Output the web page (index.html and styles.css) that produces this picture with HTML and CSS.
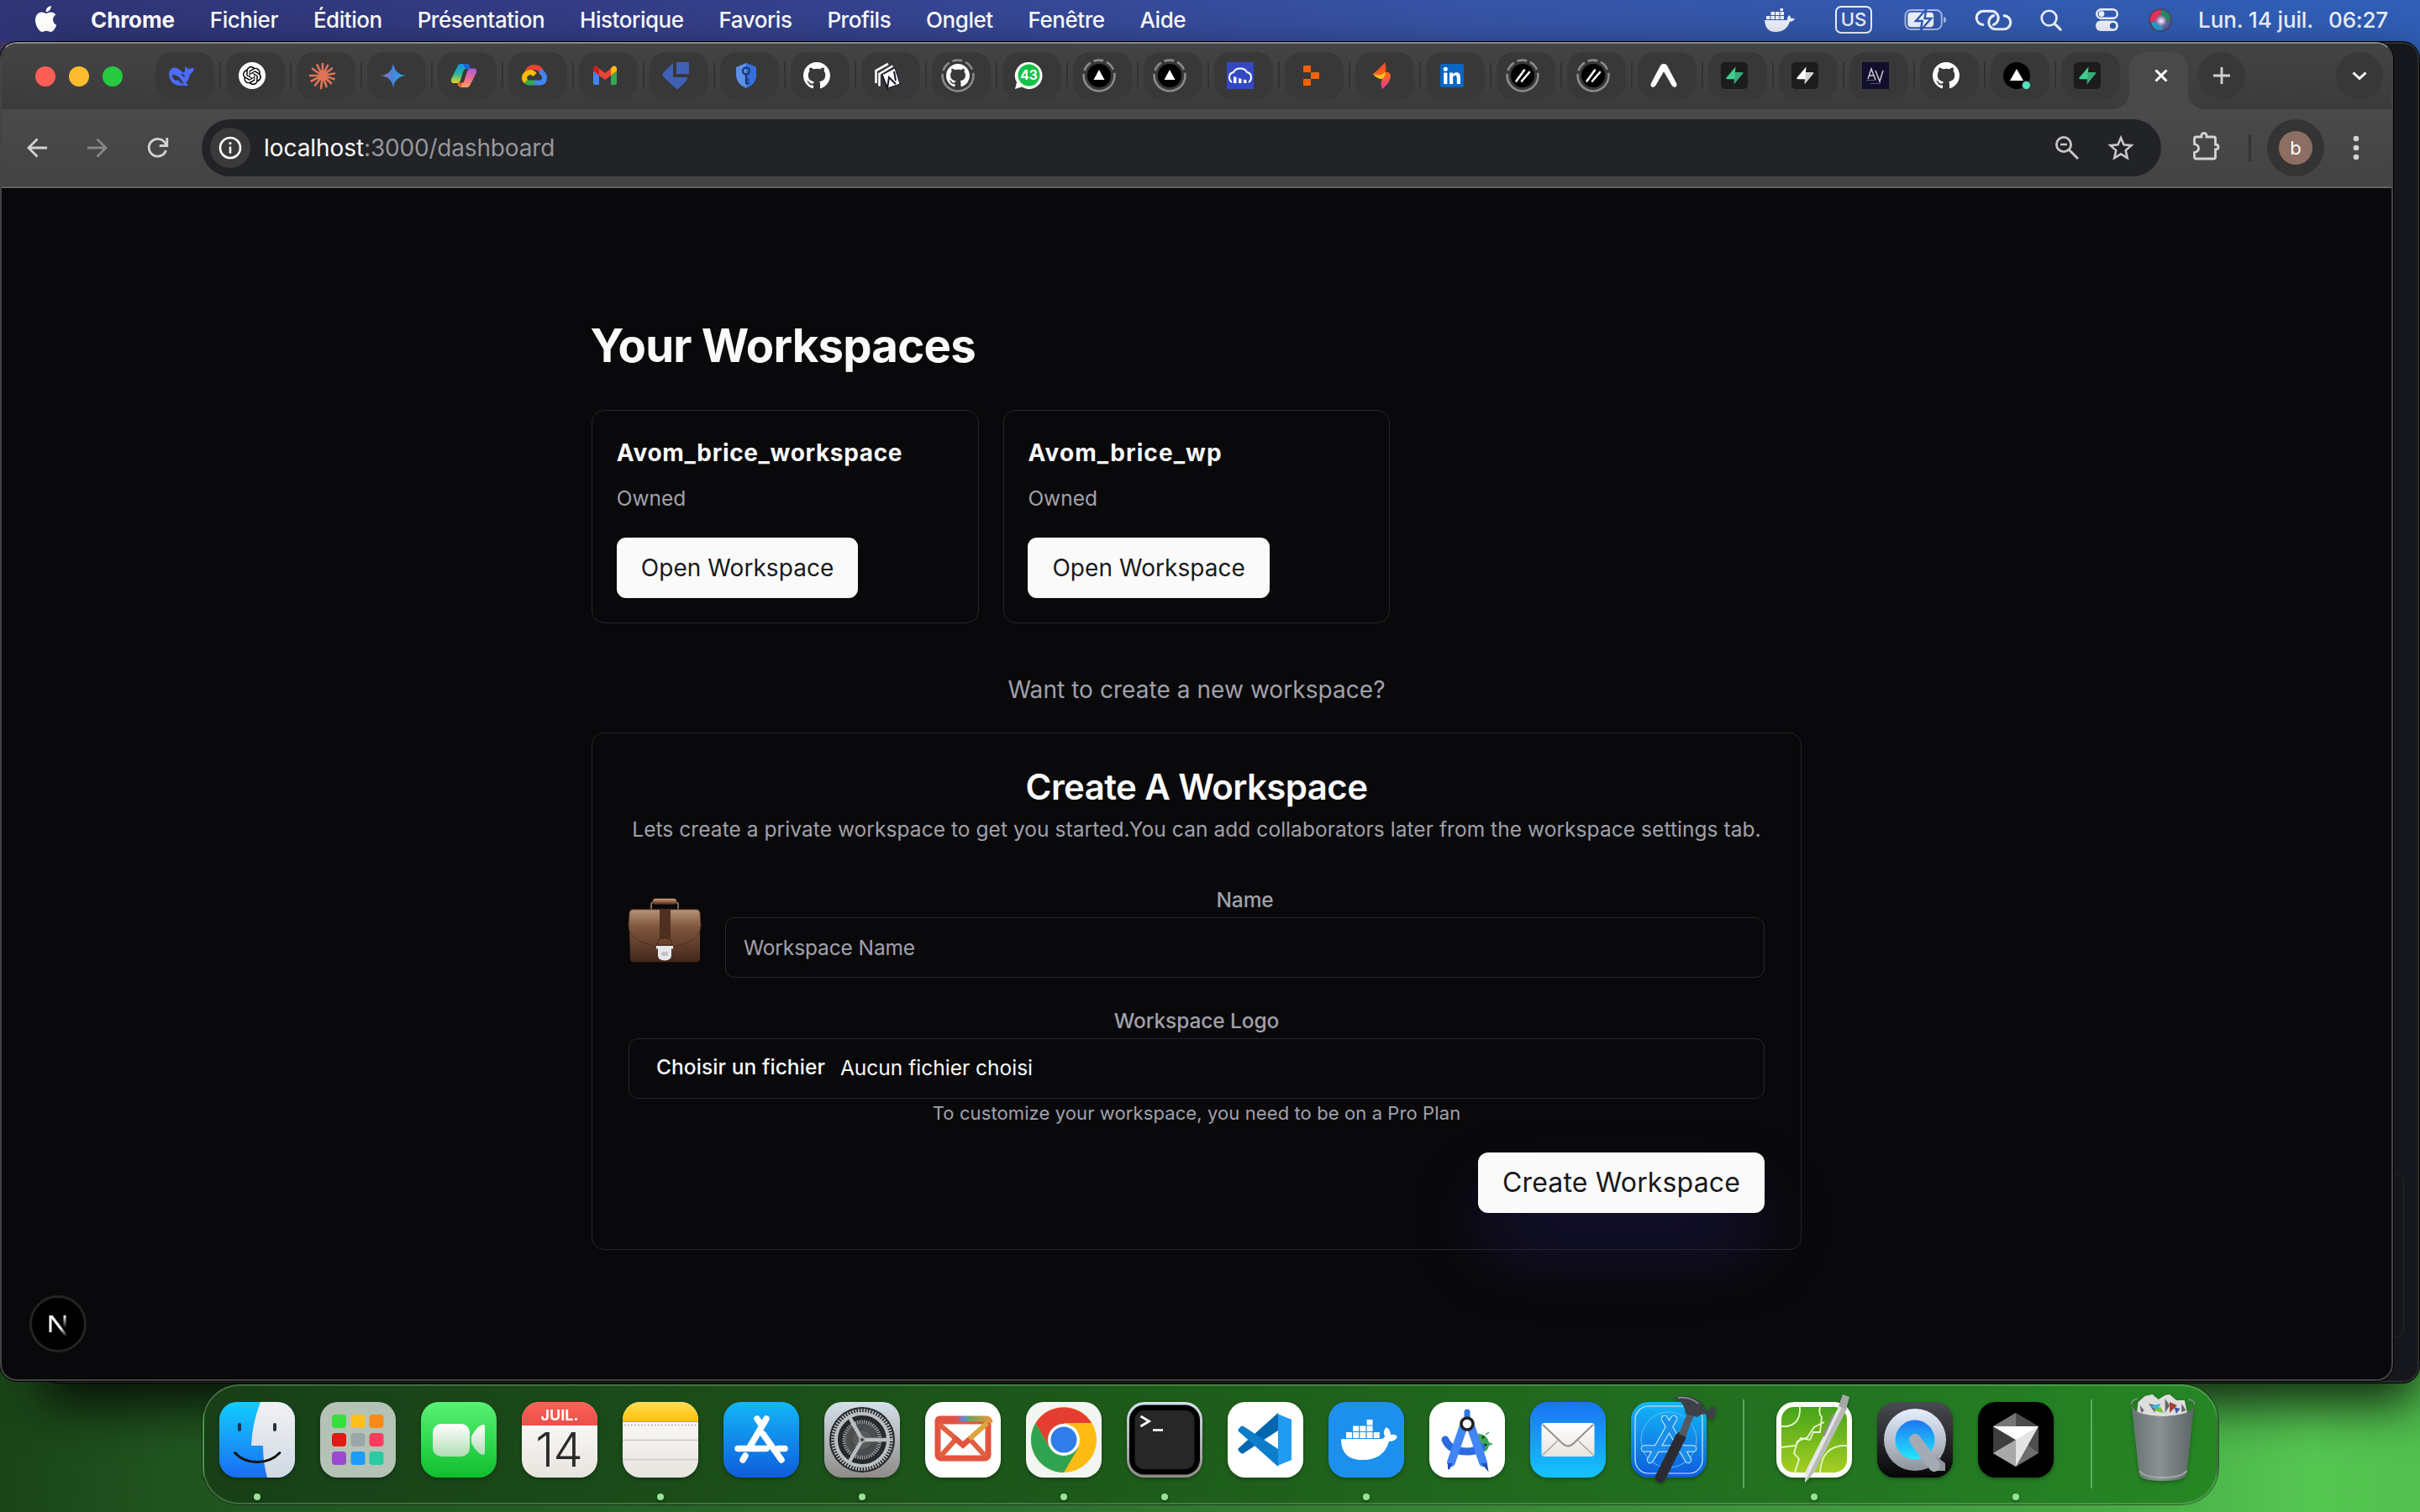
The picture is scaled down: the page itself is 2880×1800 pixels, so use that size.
FILE: index.html
```html
<!DOCTYPE html>
<html lang="fr">
<head>
<meta charset="utf-8">
<title>Dashboard</title>
<link rel="stylesheet" href="styles.css">
</head>
<body>
<svg class="defs" width="0" height="0" aria-hidden="true">
  <defs>
    <linearGradient id="gGem" x1="0" x2="1"><stop offset="0" stop-color="#9a6fb8"/><stop offset=".45" stop-color="#4c82d8"/><stop offset="1" stop-color="#16b3e6"/></linearGradient>
    <linearGradient id="gCopA" x1="0" y1="0" x2="0" y2="1"><stop offset="0" stop-color="#1496e8"/><stop offset=".5" stop-color="#27b5a0"/><stop offset="1" stop-color="#e9d51f"/></linearGradient>
    <linearGradient id="gCopB" x1="0" y1="0" x2="0" y2="1"><stop offset="0" stop-color="#a65be8"/><stop offset=".55" stop-color="#f06a8e"/><stop offset="1" stop-color="#f7a35c"/></linearGradient>
    <linearGradient id="gFlame" x1="0" y1="0" x2="0" y2="1"><stop offset="0" stop-color="#ef3f2f"/><stop offset=".45" stop-color="#fb6a1a"/><stop offset="1" stop-color="#e0359a"/></linearGradient>
    <linearGradient id="gFinder" x1="0" y1="0" x2="0" y2="1"><stop offset="0" stop-color="#12ccff"/><stop offset="1" stop-color="#1a6df2"/></linearGradient>
    <linearGradient id="gFinderR" x1="0" y1="0" x2="0" y2="1"><stop offset="0" stop-color="#f1f1f3"/><stop offset="1" stop-color="#cfd9e5"/></linearGradient>
    <linearGradient id="gFace" x1="0" y1="0" x2="0" y2="1"><stop offset="0" stop-color="#58f274"/><stop offset="1" stop-color="#0fbf2c"/></linearGradient>
    <linearGradient id="gLens" x1="0" y1="0" x2="0" y2="1"><stop offset="0" stop-color="#fff"/><stop offset="1" stop-color="#b2dcb6"/></linearGradient>
    <linearGradient id="gRed" x1="0" y1="0" x2="0" y2="1"><stop offset="0" stop-color="#ff6157"/><stop offset="1" stop-color="#e9504a"/></linearGradient>
    <linearGradient id="gNote" x1="0" y1="0" x2="0" y2="1"><stop offset="0" stop-color="#ffdd55"/><stop offset="1" stop-color="#ffc107"/></linearGradient>
    <linearGradient id="gPaper" x1="0" y1="0" x2="0" y2="1"><stop offset="0" stop-color="#fff"/><stop offset="1" stop-color="#e8e4de"/></linearGradient>
    <linearGradient id="gStore" x1="0" y1="0" x2="0" y2="1"><stop offset="0" stop-color="#12b7f8"/><stop offset="1" stop-color="#0f5cdc"/></linearGradient>
    <linearGradient id="gSet" x1="0" y1="0" x2="0" y2="1"><stop offset="0" stop-color="#d3e1ea"/><stop offset="1" stop-color="#8f8b88"/></linearGradient>
    <linearGradient id="gMail" x1="0" y1="0" x2="0" y2="1"><stop offset="0" stop-color="#1b73f2"/><stop offset="1" stop-color="#14c4fd"/></linearGradient>
    <linearGradient id="gMime" x1="0" x2="1"><stop offset="0" stop-color="#e2523e"/><stop offset=".36" stop-color="#e0504a"/><stop offset=".5" stop-color="#5b8ae0"/><stop offset=".62" stop-color="#6aa65a"/><stop offset="1" stop-color="#e8963a"/></linearGradient>
    <linearGradient id="gCote" x1="0" y1="0" x2="0" y2="1"><stop offset="0" stop-color="#46a31a"/><stop offset="1" stop-color="#a5cf22"/></linearGradient>
    <linearGradient id="gQbg" x1="0" y1="0" x2="0" y2="1"><stop offset="0" stop-color="#4a4c52"/><stop offset="1" stop-color="#060607"/></linearGradient>
    <linearGradient id="gQ" x1="0" y1="0" x2="0" y2="1"><stop offset="0" stop-color="#e6efff"/><stop offset="1" stop-color="#8d939c"/></linearGradient>
    <linearGradient id="gQb" x1="0" y1="0" x2="0" y2="1"><stop offset="0" stop-color="#1d76f2"/><stop offset="1" stop-color="#23e8ff"/></linearGradient>
    <linearGradient id="gTrash" x1="0" x2="1"><stop offset="0" stop-color="#6d7377"/><stop offset=".45" stop-color="#8f9498"/><stop offset="1" stop-color="#5f6569"/></linearGradient>
    <linearGradient id="gBag" x1="0" y1="0" x2="0" y2="1"><stop offset="0" stop-color="#b8947a"/><stop offset=".45" stop-color="#80583f"/><stop offset="1" stop-color="#5f3b2a"/></linearGradient>
    <linearGradient id="gBody" x1="0" y1="0" x2="0" y2="1"><stop offset="0" stop-color="#80563f"/><stop offset="1" stop-color="#43271d"/></linearGradient>
    <linearGradient id="gHandle" x1="0" y1="0" x2="0" y2="1"><stop offset="0" stop-color="#d9a07a"/><stop offset="1" stop-color="#4b2b1b"/></linearGradient>
    <radialGradient id="gSiri"><stop offset="0" stop-color="#fff"/><stop offset=".4" stop-color="#c4a5d8"/><stop offset="1" stop-color="#40587f" stop-opacity="0"/></radialGradient>
    <linearGradient id="gN1" x1="0" y1="0" x2="0" y2="1"><stop offset="0" stop-color="#fff"/><stop offset="1" stop-color="#fff" stop-opacity="0"/></linearGradient>
    <linearGradient id="gN2" gradientUnits="userSpaceOnUse" x1="30" y1="30" x2="44" y2="49"><stop offset=".45" stop-color="#fff"/><stop offset="1" stop-color="#fff" stop-opacity="0"/></linearGradient>
    <symbol id="github" viewBox="0 0 16 16"><path fill="#fff" d="M8 0C3.58 0 0 3.58 0 8c0 3.54 2.29 6.53 5.47 7.59.4.07.55-.17.55-.38 0-.19-.01-.82-.01-1.49-2.01.37-2.53-.49-2.69-.94-.09-.23-.48-.94-.82-1.13-.28-.15-.68-.52-.01-.53.63-.01 1.08.58 1.23.82.72 1.21 1.87.87 2.33.66.07-.52.28-.87.51-1.07-1.78-.2-3.64-.89-3.64-3.95 0-.87.31-1.59.82-2.15-.08-.2-.36-1.02.08-2.12 0 0 .67-.21 2.2.82.64-.18 1.32-.27 2-.27s1.36.09 2 .27c1.53-1.04 2.2-.82 2.2-.82.44 1.1.16 1.92.08 2.12.51.56.82 1.27.82 2.15 0 3.07-1.87 3.75-3.65 3.95.29.25.54.73.54 1.48 0 1.07-.01 1.93-.01 2.2 0 .21.15.46.55.38A8.01 8.01 0 0 0 16 8c0-4.42-3.58-8-8-8z"/></symbol>
    <symbol id="ring" viewBox="-4 -4 40 40"><circle cx="16" cy="16" r="18.400" fill="none" stroke="#8a8a8a" stroke-width="2.600" stroke-dasharray="26 4 12 4 12 4 12 4 37.600 0" transform="rotate(-255 16 16)"/></symbol>
    <symbol id="bolt" viewBox="0 0 32 32"><rect width="32" height="32" rx="5" fill="#1c1c1c"/><path d="M17.500 5.500 6.500 18.600q-.8 1.600 1 1.600h8.600z" fill="currentColor"/><path d="M15.600 26.500l10.600-13q.9-1.600-1-1.600h-9z" fill="currentColor" opacity=".8"/></symbol>
    <symbol id="vercel" viewBox="0 0 32 32"><circle cx="16" cy="16" r="14" fill="#000"/><path d="M16 9l6.500 12h-13z" fill="#fff"/></symbol>
    <symbol id="slashes" viewBox="0 0 32 32"><circle cx="16" cy="16" r="14" fill="#000"/><path d="M8.500 22.500 18 9.500M15 22.500 24 12" stroke="#fff" stroke-width="2.600" stroke-linecap="round"/></symbol>
    <clipPath id="squircle"><rect width="90" height="90" rx="21"/></clipPath>
  </defs>
</svg>

<header class="menubar">
  <svg class="apple" viewBox="1.500 0 20 24"><path fill="#fff" d="M12.152 6.896c-.948 0-2.415-1.078-3.96-1.04-2.04.027-3.91 1.183-4.961 3.014-2.117 3.675-.546 9.103 1.519 12.09 1.013 1.454 2.208 3.09 3.792 3.039 1.52-.065 2.09-.987 3.935-.987 1.831 0 2.35.987 3.96.948 1.637-.026 2.676-1.48 3.676-2.948 1.156-1.688 1.636-3.325 1.662-3.415-.039-.013-3.182-1.221-3.22-4.857-.026-3.04 2.48-4.494 2.597-4.559-1.429-2.09-3.623-2.324-4.39-2.376-2-.156-3.675 1.09-4.61 1.09zM15.53 3.83c.843-1.012 1.4-2.427 1.245-3.83-1.207.052-2.662.805-3.532 1.818-.78.896-1.454 2.338-1.273 3.714 1.338.104 2.715-.688 3.559-1.701"/></svg>
  <nav class="menus">
    <span class="app-name">Chrome</span><span>Fichier</span><span>Édition</span><span>Présentation</span><span>Historique</span><span>Favoris</span><span>Profils</span><span>Onglet</span><span>Fenêtre</span><span>Aide</span>
  </nav>
  <div class="status">
    <svg class="st-docker" viewBox="0 0 36 28"><path fill="#eef2fc" d="M0 14h27q0-4 2-6 2 1 2.500 4 3-.5 4.500.5-1.500 3-6 3.200Q26 28 13 28 1 28 0 14zM2 9h4.500v4H2zM7.500 9H12v4H7.500zM13 9h4.500v4H13zM18.500 9H23v4h-4.500zM7.500 4H12v4H7.500zM13 4h4.500v4H13zM18.500 4H23v4h-4.500zM18.500 0H22v3h-3.500z"/></svg>
    <span class="kbd">US</span>
    <svg class="st-batt" viewBox="0 0 52 26"><rect x="1" y="1" width="45" height="24" rx="7" fill="none" stroke="#a9bce8" stroke-width="2"/><path d="M48.500 9q3 1 3 4t-3 4z" fill="#a9bce8"/><rect x="4" y="4" width="32" height="18" rx="4" fill="#eef2fc"/><path d="M27 0 14 14.500h8L20 26l13-14.500h-8z" fill="#eef2fc" stroke="#3459b1" stroke-width="2.500"/></svg>
    <svg class="st-link" viewBox="0 0 44 26"><g fill="none" stroke="#eef2fc" stroke-width="3.200" stroke-linecap="round"><path d="M9 18.500a8 8 0 0 1 1-16.500h9a8.500 8.500 0 0 1 8 12q-1.500 3.500-5 4.500"/><path d="M35 7.500a8 8 0 0 1-1 16.500h-9a8.500 8.500 0 0 1-8-12q1.500-3.500 5-4.500"/></g></svg>
    <svg class="st-search" viewBox="0 0 27 27"><circle cx="11" cy="11" r="9.200" fill="none" stroke="#eef2fc" stroke-width="2.800"/><path d="M18 18l7 7" stroke="#eef2fc" stroke-width="3.400" stroke-linecap="round"/></svg>
    <svg class="st-ctrl" viewBox="0 0 27 27"><rect x="1.200" y="1.200" width="24.600" height="10.600" rx="5.300" fill="none" stroke="#eef2fc" stroke-width="2.400"/><circle cx="7" cy="6.500" r="3.400" fill="#eef2fc"/><rect y="14.500" width="27" height="12.500" rx="6.200" fill="#eef2fc"/><circle cx="20.500" cy="20.700" r="3.600" fill="#345ab2"/></svg>
    <svg class="st-siri" viewBox="0 0 28 28"><circle cx="14" cy="14" r="14" fill="#51466c"/><path d="M2 16A12 12 0 0 1 15 2q1 8-2 14z" fill="#e8315b"/><path d="M15 2a12 12 0 0 1 11 12q-6 2-12 0z" fill="#1f8f5c"/><path d="M3 17q7-3 11 0l4 8q-11 4-15-8z" fill="#1fa3d8"/><path d="M26 15q-1 8-8 10l-4-9z" fill="#5b62a8"/><circle cx="15" cy="15" r="9" fill="url(#gSiri)"/></svg>
    <span class="date">Lun. 14 juil.</span><span class="time">06:27</span>
  </div>
</header>

<div class="stage">
  <div class="back-window"><i class="back-scroll"></i><i class="back-panel"></i></div>
  <section class="window">
    <div class="tabstrip">
      <div class="lights"><i class="red"></i><i class="yellow"></i><i class="green"></i></div>
      <div class="tabs">
        <div class="tab"><svg class="fav" viewBox="0 0 32 32"><path fill="#4d6bfe" d="M1 14Q2 6 9 6.500q3 .5 6 3.500 2 2.500 4.500 2.500 1.500-3.500.5-7.500 2.500 1 4 3.500 3-2 7-1.500-.5 5-5 7.500-.5 6-5 10l3.500 2.500q-3.500 2-7 .5Q9 29 4 23q-3-4-3-9z"/><path fill="#383838" d="M5 15q6 0 10 5 3 4 4 6-5-1-7-5-3 2-5-.5Q5 18 5 15zM15 13.500q4 0 5.500 4-3 .5-5.500-4z"/></svg></div>
        <div class="tab"><svg class="fav" viewBox="0 0 32 32"><circle cx="16" cy="16" r="16" fill="#fff"/><path transform="translate(5 5) scale(.917)" d="M22.282 9.821a5.985 5.985 0 0 0-.516-4.91 6.046 6.046 0 0 0-6.51-2.9A6.065 6.065 0 0 0 4.981 4.182a5.985 5.985 0 0 0-3.998 2.9 6.046 6.046 0 0 0 .743 7.097 5.98 5.98 0 0 0 .51 4.911 6.051 6.051 0 0 0 6.515 2.9A5.985 5.985 0 0 0 13.26 24a6.056 6.056 0 0 0 5.772-4.206 5.99 5.99 0 0 0 3.997-2.9 6.056 6.056 0 0 0-.747-7.073zM13.260 22.430a4.476 4.476 0 0 1-2.876-1.040l.141-.081 4.779-2.758a.795.795 0 0 0 .392-.681v-6.737l2.020 1.168a.071.071 0 0 1 .038.052v5.583a4.504 4.504 0 0 1-4.494 4.494zM3.600 18.304a4.470 4.470 0 0 1-.535-3.014l.142.085 4.783 2.759a.771.771 0 0 0 .780 0l5.843-3.369v2.332a.080.080 0 0 1-.033.062L9.740 19.950a4.500 4.500 0 0 1-6.140-1.646zM2.340 7.896a4.485 4.485 0 0 1 2.366-1.973V11.600a.766.766 0 0 0 .388.676l5.815 3.355-2.020 1.168a.076.076 0 0 1-.071 0l-4.830-2.786A4.504 4.504 0 0 1 2.340 7.872zm16.597 3.855l-5.833-3.387L15.119 7.200a.076.076 0 0 1 .071 0l4.830 2.791a4.494 4.494 0 0 1-.676 8.105v-5.678a.790.790 0 0 0-.407-.667zm2.010-3.023l-.141-.085-4.774-2.782a.776.776 0 0 0-.785 0L9.409 9.230V6.897a.066.066 0 0 1 .028-.061l4.830-2.787a4.500 4.500 0 0 1 6.680 4.660zM8.307 12.863l-2.020-1.164a.080.080 0 0 1-.038-.057V6.074a4.500 4.500 0 0 1 7.375-3.453l-.142.080L8.704 5.459a.795.795 0 0 0-.393.681zm1.097-2.365l2.602-1.500 2.607 1.500v2.999l-2.597 1.500-2.607-1.500Z"/></svg></div>
        <div class="tab"><svg class="fav" viewBox="0 0 32 32"><path d="M16 16V2M16 16l6-12M16 16l11-8.500M16 16l14-2.500M16 16l13.500 4M16 16l10 9M16 16l4.500 13M16 16l-2 15M16 16 7 27.500M16 16 2.500 22.500M16 16H1M16 16 4 8M16 16 9.500 3.500" stroke="#de7356" stroke-width="2.700" stroke-linecap="round"/></svg></div>
        <div class="tab"><svg class="fav" viewBox="0 0 32 32"><path fill="url(#gGem)" d="M16 1q1.500 13.500 15 15-13.500 1.500-15 15Q14.500 17.500 1 16 14.500 14.500 16 1z"/></svg></div>
        <div class="tab"><svg class="fav" viewBox="0 0 32 32"><path fill="url(#gCopA)" d="M9 4q1-2 3-2h7q3 0 3.800 3l.7 2.500h-4q-3 0-4 3l-3.500 11q-1 3.500-4 3.500H4q-4 0-3-5z"/><path fill="#1566d8" d="M15 2h4.500q2.500 0 3.300 3l.7 2.500H19q-1.500 0-2.500-2z"/><path fill="url(#gCopB)" d="M23 28q-1 2-3 2h-7q-3 0-3.800-3L8.500 25h4q3 0 4-3l3.500-11q1-3.500 4-3.500H28q4 0 3 5z"/><path fill="#ef5b2b" d="M8.500 24.500h5.500q-1 3-1 5.500-2.500 0-3.300-3z"/></svg></div>
        <div class="tab"><svg class="fav" viewBox="0 0 32 32"><g fill="none" stroke-width="6"><path d="M7 13Q9 6 16 6q6 0 8.500 5.500" stroke="#ea4335"/><path d="M16.500 15Q13 11 9 12.500q-5 2-5 6 0 3 2.500 5" stroke="#fbbc04"/><path d="M6 22.500q1.500 2 4 2H16.500" stroke="#34a853"/><path d="M16 24.500h7q5-.5 5-6 0-5-5.500-7.500" stroke="#4285f4"/></g></svg></div>
        <div class="tab"><svg class="fav" viewBox="0 0 32 32"><path fill="#4285f4" d="M2 9l7 5v13H4q-2 0-2-2z"/><path fill="#34a853" d="M30 9l-7 5v13h5q2 0 2-2z"/><path fill="#ea4335" d="M5 4.500 16 13l11-8.500 3 3.500v3L16 21 2 11V8z"/><path fill="#c5221f" d="M2 8q0-4 4-3.500l3 2.500v8.500l-7-5z"/><path fill="#fbbc04" d="M30 8q0-4-4-3.500l-3 2.500v8.500l7-5z"/></svg></div>
        <div class="tab"><svg class="fav" viewBox="0 0 32 32"><path fill="#3f60b4" d="M17 0h15v14H17zM13 2v16h17q0 2-1 4l-9 9q-2 2-4 0L1 17q-1.500-2 0-4L12 2z"/></svg></div>
        <div class="tab"><svg class="fav" viewBox="0 0 32 32"><path fill="#5c8fe8" d="M16 1l12 5v9q0 11-12 16Q4 26 4 15V6z"/><path fill="#346fe0" d="M16 1l12 5v9q0 11-12 16z"/><circle cx="16" cy="10.500" r="4" fill="none" stroke="#1d3a78" stroke-width="2.400"/><path d="M16 15v11M16 21h3.500M16 25h3.500" stroke="#1d3a78" stroke-width="2.400"/></svg></div>
        <div class="tab"><svg class="fav"><use href="#github"/></svg></div>
        <div class="tab"><svg class="fav" viewBox="0 0 32 32"><path d="M2.500 25V10L17 2M6.500 28.500V14l16-9.500" fill="none" stroke="#fff" stroke-width="2.600"/><path fill="#fff" stroke="#15152b" d="M10 15 25 7l6 19-15 5z"/><path d="M10 16l6 15 2-13 8 8M24 11l2 11" stroke="#15152b" stroke-width="2" fill="none"/></svg></div>
        <div class="tab"><svg class="fav ringed"><use href="#github"/></svg><svg class="ring"><use href="#ring"/></svg></div>
        <div class="tab"><svg class="fav" viewBox="0 0 32 32"><path fill="#fff" d="M16 0a16 16 0 1 1-8 29.500L0 32l2-8A16 16 0 0 1 16 0z"/><circle cx="16.500" cy="15.500" r="13" fill="#16c148"/><text x="16.500" y="21.200" text-anchor="middle" class="badge-num">43</text></svg></div>
        <div class="tab"><svg class="fav"><use href="#vercel"/></svg><svg class="ring"><use href="#ring"/></svg></div>
        <div class="tab"><svg class="fav"><use href="#vercel"/></svg><svg class="ring"><use href="#ring"/></svg></div>
        <div class="tab"><svg class="fav" viewBox="0 0 32 32"><rect width="32" height="32" fill="#3448c5"/><path d="M6 24q-3-2-3-6 0-5 5-6 2-4.500 8-4.500T24 12q5 1 5 6 0 4-3 6" fill="none" stroke="#fff" stroke-width="2"/><path fill="#fff" d="M8 17l3.500 1v7H8zM14 19l3.500 1v5H14zM20 20.500l3.500 1V25H20z"/></svg></div>
        <div class="tab"><svg class="fav" viewBox="0 0 32 32"><path fill="#f26207" d="M8 4h7q1 0 1 1v7H8q-1 0-1-1V5q0-1 1-1zM16 12h9q1 0 1 1v6q0 1-1 1h-9zM8 20h8v7q0 1-1 1H8q-1 0-1-1v-6q0-1 1-1z"/></svg></div>
        <div class="tab"><svg class="fav" viewBox="0 0 32 32"><path fill="url(#gFlame)" d="M20 0q3 7 .5 11.500 6 0 6.500 5Q27 24 17 32q-3-7 0-12-6 0-11-6Q14 8 20 0z"/><path fill="#fcc321" d="M6 14q5 6 11 6 4-3 3.500-8.500Q17 16 12 15.500 8 15 6 14z"/></svg></div>
        <div class="tab"><svg class="fav" viewBox="0 0 32 32"><rect x="2" y="2" width="28" height="28" rx="2" fill="#0a66c2"/><path fill="#fff" d="M6.200 12.500h4.200V26H6.200zM13 12.500h4v1.900q1.300-2.200 4.300-2.200 4.700 0 4.700 5.800v8h-4.200v-7.200q0-3-2.200-3-2.400 0-2.400 3V26H13z"/><circle cx="8.300" cy="8.300" r="2.500" fill="#fff"/></svg></div>
        <div class="tab"><svg class="fav"><use href="#slashes"/></svg><svg class="ring"><use href="#ring"/></svg></div>
        <div class="tab"><svg class="fav"><use href="#slashes"/></svg><svg class="ring"><use href="#ring"/></svg></div>
        <div class="tab"><svg class="fav" viewBox="0 0 32 32"><path fill="#fff" d="M12 4q1-2 4-2t4 2l11 21q1.500 3-1 4.500-2.500 1-4.500-2L16.500 12q-.5-1-1 0L6.500 27.500q-2 3-4.500 2-2.500-1.500-1-4.500z"/></svg></div>
        <div class="tab"><svg class="fav green"><use href="#bolt"/></svg></div>
        <div class="tab"><svg class="fav white"><use href="#bolt"/></svg></div>
        <div class="tab"><svg class="fav" viewBox="0 0 32 32"><rect width="32" height="32" fill="#120f2c"/><path d="M7 20l4-12 5 13M9 16h5M16 10l5 13 4-13" fill="none" stroke="#c9c8d4" stroke-width="1.500"/><path d="M5 21.500h11M10 25.500h12" stroke="#55536d"/></svg></div>
        <div class="tab"><svg class="fav"><use href="#github"/></svg></div>
        <div class="tab"><svg class="fav" viewBox="0 0 32 32"><circle cx="16" cy="16" r="16" fill="#000"/><path d="M16 8l8 14H8z" fill="#fff"/><circle cx="27.500" cy="27.500" r="5" fill="#50e3c2" stroke="#383838"/></svg></div>
        <div class="tab last"><svg class="fav green"><use href="#bolt"/></svg></div>
      </div>
      <div class="tab-active"><svg viewBox="0 0 16 16"><path d="M1.500 1.500l13 13M14.500 1.500l-13 13" stroke="#fff" stroke-width="3"/></svg></div>
      <div class="round-btn"><svg viewBox="0 0 20 20"><path d="M10 0v20M0 10h20" stroke="#d2d2d2" stroke-width="2.800"/></svg></div>
      <div class="round-btn tab-search"><svg viewBox="0 0 20 20"><path d="M2.500 6.500 10 13.500l7.500-7" fill="none" stroke="#fff" stroke-width="3"/></svg></div>
    </div>

    <div class="toolbar">
      <div class="nav-btn"><svg viewBox="0 0 24 24"><path d="M24 12H2M12.500 1.500 2 12l10.500 10.500" fill="none" stroke="#d4d4d4" stroke-width="2.800"/></svg></div>
      <div class="nav-btn"><svg viewBox="0 0 24 24"><path d="M0 12h22M11.500 1.500 22 12 11.500 22.500" fill="none" stroke="#868686" stroke-width="2.800"/></svg></div>
      <div class="nav-btn"><svg viewBox="0 0 24 24"><path d="M21.500 15A10.400 10.400 0 1 1 20 5.500l2.200 3" fill="none" stroke="#d4d4d4" stroke-width="2.800"/><path d="M22.800 0v9.500h-9" fill="none" stroke="#d4d4d4" stroke-width="2.800"/></svg></div>
      <div class="omnibox">
        <span class="info"><svg viewBox="0 0 28 28"><circle cx="14" cy="14" r="12" fill="none" stroke="#fff" stroke-width="2.600"/><path d="M14 12.500v8" stroke="#fff" stroke-width="2.600"/><circle cx="14" cy="8.600" r="1.600" fill="#fff"/></svg></span>
        <span class="url"><b>localhost</b>:3000/dashboard</span>
        <svg class="omni-icon" viewBox="0 0 32 32"><circle cx="12" cy="12" r="8.600" fill="none" stroke="#c7c7c7" stroke-width="2.800"/><path d="M8 12h8" stroke="#c7c7c7" stroke-width="2.600"/><path d="M18.500 18.500 29 29" stroke="#c7c7c7" stroke-width="3"/></svg>
        <svg class="omni-icon" viewBox="0 0 32 32"><path d="M16 4l3.500 8.300 9 .8-6.800 6 2 8.900-7.700-4.700-7.700 4.700 2-8.900-6.800-6 9-.8z" fill="none" stroke="#c7c7c7" stroke-width="2.600"/></svg>
      </div>
      <svg class="puzzle" viewBox="0 0 34 34"><path d="M3.500 8q0-2 2-2H12q-.5-4.500 3-4.500T18 6h8.500q2 0 2 2v7q3.500 0 3.500 3t-3.500 3v9q0 2-2 2h-21q-2 0-2-2v-5.500q5-1 5-5t-5-5z" fill="none" stroke="#d4d4d4" stroke-width="2.800"/></svg>
      <i class="divider"></i>
      <div class="avatar"><span>b</span></div>
      <svg class="dots" viewBox="0 0 8 30"><circle cx="4" cy="4" r="3.300"/><circle cx="4" cy="15" r="3.300"/><circle cx="4" cy="26" r="3.300"/></svg>
    </div>

    <main class="page">
      <div class="container">
        <h1>Your Workspaces</h1>
        <div class="cards">
          <article class="card"><h2>Avom_brice_workspace</h2><p>Owned</p><button class="btn">Open Workspace</button></article>
          <article class="card"><h2 class="wide">Avom_brice_wp</h2><p>Owned</p><button class="btn">Open Workspace</button></article>
        </div>
        <p class="prompt">Want to create a new workspace?</p>
        <section class="form">
          <h2>Create A Workspace</h2>
          <p class="lead">Lets create a private workspace to get you started.You can add collaborators later from the workspace settings tab.</p>
          <div class="name-row">
            <svg class="briefcase" viewBox="0 0 86 90" preserveAspectRatio="none">
              <path d="M27 17V10q0-3 3-3h26q3 0 3 3v7" fill="none" stroke="#8a6650" stroke-width="2"/>
              <rect x="29" y="2" width="28" height="8" rx="3" fill="url(#gHandle)"/>
              <path d="M1 40h84v45q0 4-4 4H6q-4 0-4-4z" fill="url(#gBody)"/>
              <path d="M5 17h76q3 0 4 4l1 18q0 17-19 25-23 9-46 0Q0 56 0 39l1-18q1-4 4-4z" fill="url(#gBag)" stroke="#4e2f20"/>
              <path d="M37 17h13v40H37z" fill="#4f3020"/><path d="M34 66q0-10 9-10t9 10z" fill="#6c4330" stroke="#3b2116"/>
              <path d="M33 67h20v4h-2v9q0 7-8 7t-8-7v-9h-2z" fill="#e8e8ea"/><rect x="39" y="75" width="8" height="6" rx="2" fill="#c4c4c8"/>
            </svg>
            <div class="field grow"><label>Name</label><div class="input placeholder">Workspace Name</div></div>
          </div>
          <div class="field logo"><label>Workspace Logo</label><div class="input file"><span class="choose">Choisir un fichier</span><span>Aucun fichier choisi</span></div></div>
          <p class="help">To customize your workspace, you need to be on a Pro Plan</p>
          <div class="actions"><button class="btn btn-create">Create Workspace</button></div>
        </section>
      </div>
      <div class="next-badge"><svg viewBox="0 0 68 68"><circle cx="34" cy="34" r="32.500" fill="#000" stroke="#242424" stroke-width="3"/><path d="M23.500 24h3v20h-3z" fill="#fff"/><path d="M40.500 24h3v15h-3z" fill="url(#gN1)"/><path d="M23.500 24h4L45 47l-2.500 2z" fill="url(#gN2)"/></svg></div>
    </main>
  </section>
</div>

<footer class="dock">
  <div class="dock-item running"><svg viewBox="0 0 90 90"><g clip-path="url(#squircle)"><rect width="90" height="90" fill="url(#gFinder)"/><path d="M49 0Q39 26 38 52h14q0 20 5 38h33V0z" fill="url(#gFinderR)"/></g><path d="M24 27v6M66 27v6" stroke="#27313c" stroke-width="4" stroke-linecap="round"/><path d="M18.500 60.500q10 11 26.500 11t27-11" fill="none" stroke="#111" stroke-width="2.800" stroke-linecap="round"/></svg></div>
  <div class="dock-item"><svg viewBox="0 0 90 90"><rect width="90" height="90" rx="21" fill="#b4c3b5"/><g><rect x="14" y="15" width="17" height="16" rx="4" fill="#38de3e"/><rect x="36.500" y="15" width="17" height="16" rx="4" fill="#ffc01c"/><rect x="58.500" y="15" width="17" height="16" rx="4" fill="#f98a16"/><rect x="14" y="37" width="17" height="16" rx="4" fill="#df1a17"/><rect x="36.500" y="37" width="17" height="16" rx="4" fill="#9ca5aa"/><rect x="58.500" y="37" width="17" height="16" rx="4" fill="#fc3d60"/><rect x="14" y="59" width="17" height="16" rx="4" fill="#9b49cf"/><rect x="36.500" y="59" width="17" height="16" rx="4" fill="#1c9cf6"/><rect x="58.500" y="59" width="17" height="16" rx="4" fill="#2acba3"/></g></svg></div>
  <div class="dock-item"><svg viewBox="0 0 90 90"><rect width="90" height="90" rx="21" fill="url(#gFace)"/><rect x="14" y="26" width="44" height="39" rx="10" fill="url(#gLens)"/><path d="M60 41q8-14 14-14 2 0 2 3v30q0 3-2 3-6 0-14-14z" fill="url(#gLens)"/></svg></div>
  <div class="dock-item"><svg viewBox="0 0 90 90"><g clip-path="url(#squircle)"><rect width="90" height="90" fill="url(#gPaper)"/><rect width="90" height="28" fill="url(#gRed)"/></g><text x="45" y="21.500" text-anchor="middle" class="cal-month">JUIL.</text><text x="44" y="76.500" text-anchor="middle" class="cal-day">14</text></svg></div>
  <div class="dock-item running"><svg viewBox="0 0 90 90"><g clip-path="url(#squircle)"><rect width="90" height="90" fill="url(#gPaper)"/><rect width="90" height="23" fill="url(#gNote)"/><path d="M0 23.500h90" stroke="#a39d8c"/><path d="M2 27.500h88" stroke="#b3b0aa" stroke-width="2" stroke-dasharray="1.500 2.500"/><path d="M0 45.500h90M0 68.500h90" stroke="#ccc9c9" stroke-width="1.500"/></g></svg></div>
  <div class="dock-item"><svg viewBox="0 0 90 90"><rect width="90" height="90" rx="21" fill="url(#gStore)"/><path d="M51 20 31 54M26 64l-3 5M40 20l4 6M47 38l22 31M17 55.500h34M65 55.500h8" stroke="#fff" stroke-width="7.500" stroke-linecap="round"/></svg></div>
  <div class="dock-item running"><svg viewBox="0 0 90 90"><rect width="90" height="90" rx="21" fill="url(#gSet)"/><circle cx="45" cy="45" r="39" fill="#26282a"/><circle cx="45" cy="45" r="34" fill="none" stroke="#b2b8bb" stroke-width="6" stroke-dasharray="1.800 1.500"/><circle cx="45" cy="45" r="31" fill="none" stroke="#b9c0c3" stroke-width="4"/><circle cx="45" cy="45" r="20" fill="#595a5a"/><circle cx="45" cy="45" r="21.500" fill="none" stroke="#9a9fa1" stroke-width="4" stroke-dasharray="1.500 1.200"/><circle cx="45" cy="45" r="15" fill="none" stroke="#4a4c4d" stroke-width="8"/><path d="M45 45h30M45 45 30 18M45 45 30 71" stroke="#b9c0c3" stroke-width="4.500"/><circle cx="45" cy="45" r="4" fill="#a2a8ab"/><circle cx="45" cy="45" r="1.800" fill="#333"/></svg></div>
  <div class="dock-item"><svg viewBox="0 0 90 90"><rect width="90" height="90" rx="21" fill="#fff"/><rect x="15" y="23" width="60" height="44" rx="4" fill="none" stroke="#e2553f" stroke-width="7"/><path d="M15 26v-3q0-3 3-3h54q5 0 5 5" stroke="url(#gMime)" stroke-width="7" fill="none"/><path d="M16 26 45 51M18 65l18-20M72 65 54 45" fill="none" stroke="#e2603f" stroke-width="6"/><path d="M43 50l3 0L74 25" stroke="#dda53c" stroke-width="6" fill="none"/><path d="M34 42l11 9.500 8-7" fill="none" stroke="#e2553f" stroke-width="6.500"/></svg></div>
  <div class="dock-item running"><svg viewBox="0 0 90 90"><rect width="90" height="90" rx="21" fill="#f3f5f2"/><circle cx="45" cy="45" r="39" fill="#fdbb14"/><path d="M11.500 25A39 39 0 0 1 78 25H45v20z" fill="#e53d32"/><path d="M11.500 25A39 39 0 0 0 45 84l17-29-34-1z" fill="#30a350"/><path d="M11.500 25 27 52l18-7V25z" fill="#e53d32"/><circle cx="45" cy="45" r="19" fill="#fff"/><circle cx="45" cy="45" r="15.500" fill="#2f7de9"/></svg></div>
  <div class="dock-item running"><svg viewBox="0 0 90 90"><rect width="90" height="90" rx="21" fill="url(#gSet)"/><rect x="3" y="3.500" width="84" height="83" rx="18" fill="#000"/><rect x="9.500" y="10" width="71" height="70" rx="11" fill="#272727"/><path d="M16.500 17l10 6-10 6" fill="none" stroke="#fff" stroke-width="2.800"/><path d="M31 33.500h12" stroke="#fff" stroke-width="2.600"/></svg></div>
  <div class="dock-item"><svg viewBox="0 0 90 90"><rect width="90" height="90" rx="21" fill="#fff"/><path d="M60 13v21L19 61q-1.500 1-3 0l-3-3q-1.500-1.500 0-3z" fill="#0066b0"/><path d="M60 77V56L19 29q-1.500-1-3 0l-3 3q-1.500 1.500 0 3z" fill="#0b7dca"/><path d="M58 13.500 76 21v48l-18 7.500q2-1 2-4v-55q0-3-2-4z" fill="#1f9cf0"/></svg></div>
  <div class="dock-item running"><svg viewBox="0 0 90 90"><rect width="90" height="90" rx="21" fill="#1c90ec"/><path fill="#fff" d="M15 46q0-2 2-2h46q4-1 4-3-3-7 2-11 5 3 5 9 5-1 8 2-2 6-10 6-6 22-32 22-24 0-25-23zM21 36h7v7h-7zM29.200 36h7v7h-7zM37.400 36h7v7h-7zM45.600 36h7v7h-7zM53.800 36h7v7h-7zM29.200 28.500h7V35h-7zM37.400 28.500h7V35h-7zM45.600 28.500h7V35h-7zM45.600 21h7v6.500h-7z"/></svg></div>
  <div class="dock-item"><svg viewBox="0 0 90 90"><rect width="90" height="90" rx="21" fill="#fff"/><path d="M54 38q14-2 17 10l5 2-5 2q-2 8-10 9z" fill="#3ea558"/><path d="M67 39l4-3" stroke="#3ea558" stroke-width="1.500"/><circle cx="64" cy="42" r="1.600" fill="#14351d"/><circle cx="67" cy="51" r="1.600" fill="#14351d"/><path d="M19 45q6 14 26 14 10 0 17-5" fill="none" stroke="#2c6ae0" stroke-width="9" stroke-linecap="round"/><path d="M45 12v10" stroke="#2f77ea" stroke-width="7" stroke-linecap="round"/><path d="M41 28 26 72M49 28l15 44" stroke="#4285f4" stroke-width="10" stroke-linecap="round"/><path d="M23 74l3 0-3 6zM64 74h4l1 6z" fill="#1d4fb5" stroke="#1d4fb5" stroke-width="2"/><circle cx="45" cy="26" r="7" fill="#fff" stroke="#202124" stroke-width="3.500"/></svg></div>
  <div class="dock-item"><svg viewBox="0 0 90 90"><rect width="90" height="90" rx="21" fill="url(#gMail)"/><rect x="13.500" y="25" width="63" height="40" rx="4" fill="url(#gPaper)"/><path d="M15 63 33 46M75 63 57 46" stroke="#a9a5a0" stroke-width="1.500"/><path d="M15 27l23 22q7 7 14 0l23-22" fill="none" stroke="#8f8c89" stroke-width="1.800"/></svg></div>
  <div class="dock-item"><svg viewBox="0 0 90 90"><rect width="90" height="90" rx="21" fill="url(#gStore)"/><rect x="5" y="5" width="80" height="80" rx="16" fill="none" stroke="#cfeaff" stroke-width="1.200"/><circle cx="45" cy="45" r="33" fill="none" stroke="#5fc0fa" stroke-width="1"/><path d="M51 20 23 69M40 20l28 49M16 55.500h58" stroke="#d8f0ff" stroke-width="8.500" stroke-linecap="round"/><path d="M51 20 23 69M40 20l28 49M16 55.500h58" stroke="#1b8eea" stroke-width="6.500" stroke-linecap="round"/><path d="M59 42 35 90" stroke="#2b2c33" stroke-width="12.500" stroke-linecap="round"/><path d="M72 12 61 40" stroke="#55575f" stroke-width="8.500"/><path d="M50-5q20-7 36 8l2 6q2 2 5 1l2-5 6 2-3 14-6-2q-1-4-5-5-6 2-8 4l-14-4Q63-2 50-5z" fill="#3e4047"/><path d="M56-5q14-2 24 7" stroke="#8c8e96" stroke-width="1.800" fill="none"/></svg></div>
  <i class="dock-sep first"></i>
  <div class="dock-item running"><svg viewBox="0 0 90 90"><rect width="90" height="90" rx="21" fill="#fbfcf6"/><rect x="6" y="6" width="78" height="78" rx="15" fill="url(#gCote)"/><path d="M28 6q1 20-15 23l-7 0M52 6q-2 8 2 12l-2 18-8 0-4 9-11-2-6 9-17 2M84 52q-30-1-32 32M22 84l5-16-6-7 4-14 12-5 8-12 12-6" fill="none" stroke="#e9f7d0" stroke-width="1.800"/><path d="M75 4l9 4-40 77-10 11 1-14z" fill="#e6e6e6"/><path d="M78 6l6 2-40 77-10 11z" fill="#b9b9b9"/><path d="M79-9l8 3-4 15-9-4z" fill="#a7a7a7"/><path d="M68 15 56 41" stroke="#8e8e8e" stroke-width="2.500"/></svg></div>
  <div class="dock-item"><svg viewBox="0 0 90 90"><rect width="90" height="90" rx="21" fill="url(#gQbg)"/><circle cx="45" cy="45" r="37" fill="url(#gQ)"/><path d="M54 66h18l9 7v9H66z" fill="#91979f"/><circle cx="45" cy="45" r="23.500" fill="url(#gQb)"/><path d="M45 45 68 76" stroke="#a5abb4" stroke-width="14" stroke-linecap="round"/></svg></div>
  <div class="dock-item running"><svg viewBox="0 0 90 90"><rect width="90" height="90" rx="21" fill="#000"/><path d="M45 13 72 29H18z" fill="#4c4c4c"/><path d="M45 13v16H18z" fill="#777"/><path d="M18 29h54v32L45 77 18 61z" fill="#6e6e6e"/><path d="M18 29v32l27-16z" fill="#3e3e3e"/><path d="M18 61l27-16v32z" fill="#a9a9a9"/><path d="M72 61 58 50l14-21z" fill="#4e4e4e"/><path d="M18 29h54L45 77V45z" fill="#e4e4e4"/><path d="M18 29h54L45 45z" fill="#fff"/></svg></div>
  <i class="dock-sep second"></i>
  <div class="dock-item trash"><svg viewBox="0 0 90 90" preserveAspectRatio="none"><path d="M12 0l9-7 10-2 8 6 9-5 6-1 9 7 11 0 4 16-34 4-34-4z" fill="#dedede"/><path d="M26 2l10 2-2 9zM48-4l6 8-6 9zM70 2l6 8-6 2zM14 4l6 6-4 3z" fill="#666"/><path d="M28 5l14-3-4 8z" fill="#37b8e0"/><path d="M54 0l10 4-10 9z" fill="#a5452f"/><path d="M60 6l8 2-5 6z" fill="#3a5ba8"/><path d="M32 10l10-4 4 7z" fill="#7abf3a"/><path d="M3 3q3 13 42 14Q84 16 87 3l-10 82q-1 9-32 9t-32-9z" fill="url(#gTrash)" opacity=".95"/><path d="M3 3q-1-5 8-7M87 3q1-5-8-6" fill="none" stroke="#8a8f93" stroke-width="1.500"/><path d="M14 82q6 8 31 8t32-8" fill="none" stroke="#b5b9bb" stroke-width="2" opacity=".7"/></svg></div>
</footer>
</body>
</html>
```
FILE: styles.css
```css
* { box-sizing: border-box; }
html, body { margin: 0; }
body {
  width: 2880px; height: 1800px; overflow: hidden;
  display: flex; flex-direction: column;
  font-family: "Inter", "Liberation Sans", sans-serif;
  background: linear-gradient(90deg, #1a4517 0, #205420 200px, #235c22 600px, #2f712e 1300px, #3c8e3a 1950px, #46a944 2500px, #55c652 2750px, #51c04e 2880px);
}
h1, h2, p { margin: 0; }
svg { display: block; flex: none; overflow: visible; }
.defs { position: absolute; }

/* Menu bar */
.menubar {
  height: 50px; flex: none; display: flex; align-items: center;
  padding: 0 38px 3px 41px; color: #fff; font-size: 26px; font-weight: 500;
  background: linear-gradient(95deg, #2f3474 0, #35408b 900px, #3754a6 1750px, #305fb8 2880px);
}
.apple { width: 26px; height: 31px; margin-top: -3px; }
.menus { display: flex; gap: 41.850px; margin-left: 41px; letter-spacing: -.45px; }
.app-name { font-weight: 700; letter-spacing: -.1px; }
.status { display: flex; align-items: center; margin-left: auto; color: #eef2fc; }
.st-docker { width: 36px; height: 28px; margin-right: 48px; }
.kbd {
  width: 44px; height: 33px; margin-right: 38px; border: 2.500px solid #eef2fc; border-radius: 7px;
  font-size: 22px; line-height: 28px; text-align: center;
}
.st-batt { width: 51px; height: 25px; margin-right: 34px; }
.st-link { width: 43px; height: 26px; margin-right: 34px; }
.st-search { width: 26px; height: 26px; margin-right: 40px; }
.st-ctrl { width: 27px; height: 27px; margin-right: 36px; }
.st-siri { width: 28px; height: 28px; margin-right: 31px; }
.date { letter-spacing: -.115px; margin-right: 18px; }
.time { letter-spacing: -.2px; }

/* Windows */
.stage {
  position: relative; height: 1594px; flex: none;
  background: linear-gradient(90deg, #42355f 0, #35408b 900px, #305fb8 2880px) 0 0 / 100% 40px no-repeat;
}
.back-window {
  position: absolute; left: 50px; top: 0; width: 2829px; height: 1596px;
  background: #15171c; border: 2px solid #2c2d30; border-left: 0; border-radius: 20px;
  box-shadow: 0 0 0 1px #000, 0 26px 60px rgba(0, 0, 0, .8);
}
.back-scroll { position: absolute; right: 28px; top: 482px; width: 2px; height: 346px; background: #2e4046; }
.back-panel { position: absolute; right: 16px; top: 1345px; width: 16px; height: 195px; border: 1px solid #22242a; border-radius: 10px; }
.window {
  position: absolute; left: 0; top: 0; width: 2848px; height: 1594px; overflow: hidden;
  display: flex; flex-direction: column; background: #09090b;
  border: 2px solid #444446; border-top-color: #888; border-radius: 20px; box-shadow: 0 0 0 1px #000;
}
.tabstrip {
  height: 78px; flex: none; display: flex; align-items: flex-start; padding: 10px 10px 0 0;
  background: linear-gradient(#444, #3b3b3b);
}
.lights { display: flex; gap: 16px; padding: 17px 0 0 40px; width: 183px; }
.lights i { width: 24px; height: 24px; border-radius: 50%; }
.lights .red { background: #ff5f57; }
.lights .yellow { background: #febc2e; }
.lights .green { background: #28c840; }
.tabs { display: flex; gap: 14px; }
.tab { position: relative; width: 70px; height: 56px; padding: 12px 15px; border-radius: 20px; background: #383838; }
.tab::after { content: ""; position: absolute; right: -8px; top: 12px; width: 2px; height: 32px; background: #323232; }
.tab.last::after { display: none; }
.fav { width: 32px; height: 32px; }
.fav.ringed { width: 28px; height: 28px; margin: 2px; }
.fav.green { color: #3ecf8e; }
.fav.white { color: #fff; }
.ring { position: absolute; left: 11px; top: 8px; width: 40px; height: 40px; }
.badge-num { font: 700 15.500px "Inter", sans-serif; fill: #fff; }
.tab-active {
  position: relative; width: 70px; height: 68px; margin-left: 11px; padding: 20px 0 0 30px;
  border-radius: 20px 20px 0 0; background: #494949;
}
.tab-active svg { width: 16px; height: 16px; }
.tab-active::before, .tab-active::after { content: ""; position: absolute; bottom: 0; width: 20px; height: 20px; }
.tab-active::before { left: -20px; background: radial-gradient(circle at 0 0, transparent 19.500px, #494949 20.500px); }
.tab-active::after { right: -20px; background: radial-gradient(circle at 100% 0, transparent 19.500px, #494949 20.500px); }
.round-btn {
  display: flex; align-items: center; justify-content: center; width: 56px; height: 56px;
  margin-left: 12px; border-radius: 28px; background: #383838;
}
.round-btn svg { width: 20px; height: 20px; }
.tab-search { margin-left: auto; }
.toolbar {
  height: 94px; flex: none; display: flex; align-items: center; padding: 0 38px 0 14px;
  background: linear-gradient(#4a4a4a, #434343); border-bottom: 2px solid #606060;
}
.nav-btn { width: 56px; margin-right: 16px; display: flex; justify-content: center; }
.nav-btn svg { width: 24px; height: 24px; }
.omnibox {
  width: 2332px; height: 68px; margin-left: 8px; padding: 0 32px 0 10px; border-radius: 34px;
  display: flex; align-items: center; gap: 32px; background: #222327;
}
.info { width: 48px; height: 48px; padding: 10px; border-radius: 50%; background: #3a3a3b; }
.info svg { width: 28px; height: 28px; }
.url { flex: 1; margin-left: -16px; font-size: 28px; letter-spacing: -.18px; color: #96979a; }
.url b { font-weight: 400; color: #fff; letter-spacing: -.07px; }
.omni-icon { width: 32px; height: 32px; }
.puzzle { width: 34px; height: 34px; margin-left: 36px; margin-top: -4px; }
.divider { width: 3px; height: 32px; margin: 0 19px 0 34px; background: #343434; }
.avatar { width: 68px; height: 68px; padding: 14px; border-radius: 50%; background: #343434; }
.avatar span {
  display: block; width: 40px; height: 40px; border-radius: 50%; background: #8d6e63;
  color: #fff; font-size: 22px; line-height: 40px; text-align: center;
}
.dots { width: 8px; height: 30px; margin-left: auto; fill: #d4d4d4; }

/* Dashboard */
.page { position: relative; flex: 1; padding: 155px 0 0 702px; color: #fafafa; }
.container { width: 1440px; }
h1 { height: 64px; margin-left: -1.500px; font-size: 54.500px; line-height: 64px; font-weight: 700; letter-spacing: -.8px; }
.cards { display: grid; grid-template-columns: repeat(3, 1fr); gap: 28.800px; margin-top: 45px; }
.card { height: 254px; padding: 28px 28.800px; border: 1px solid #27272a; border-radius: 15px; }
.card h2 { font-size: 28px; line-height: 44px; font-weight: 700; letter-spacing: .65px; }
.card h2.wide { letter-spacing: 1.100px; }
.card p { margin-top: 14px; font-size: 24.500px; line-height: 36px; color: #a1a1aa; }
.btn {
  display: block; height: 72px; padding: 0 29px; border: 0; border-radius: 11px;
  background: #fafafa; color: #18181b; font: 400 28px/72px "Inter", sans-serif; letter-spacing: .05px; white-space: nowrap;
}
.card .btn { margin-top: 29px; }
.prompt { margin-top: 57px; font-size: 28px; line-height: 44px; letter-spacing: .06px; text-align: center; color: #a1a1aa; }
.form { height: 616px; margin-top: 29px; padding: 38px 43px 0; border: 1px solid #27272a; border-radius: 15px; }
.form h2 { font-size: 42px; line-height: 52px; font-weight: 600; letter-spacing: -.6px; text-align: center; }
.lead { margin: 6px -10px 0; font-size: 24.500px; line-height: 36px; letter-spacing: .06px; text-align: center; white-space: nowrap; color: #a1a1aa; }
.name-row { display: flex; gap: 29px; margin-top: 48px; }
.briefcase { width: 86px; height: 78px; margin-top: 15px; }
.grow { flex: 1; }
.field label { display: block; font-size: 24.500px; line-height: 36px; font-weight: 500; letter-spacing: -.1px; text-align: center; color: #a1a1aa; }
.input {
  height: 72px; margin-top: 3px; padding: 0 21px; border: 1px solid #27272a; border-radius: 11px;
  font-size: 24.500px; line-height: 70px;
}
.placeholder { color: #a1a1aa; letter-spacing: -.12px; }
.logo { margin-top: 33px; }
.file { display: flex; gap: 18px; padding-left: 32px; line-height: 69px; }
.choose { font-weight: 500; letter-spacing: .08px; line-height: 67px; }
.help { margin-top: 1px; font-size: 22px; line-height: 32px; letter-spacing: .1px; text-align: center; color: #a1a1aa; }
.actions { display: flex; justify-content: flex-end; margin-top: 31px; }
.btn-create { letter-spacing: .15px; font-size: 32px; line-height: 70px; border-radius: 12px; box-shadow: 0 45px 90px -10px rgba(66, 50, 205, .32); }
.next-badge { position: absolute; left: 32.500px; bottom: 32px; width: 68px; height: 68px; }

/* Dock */
.dock {
  display: flex; flex: none; align-items: flex-start; gap: 30px;
  width: 2399px; height: 143px; margin: 4px 0 0 241px; padding: 19px 0 0 18px;
  position: relative; border: 2px solid rgba(150, 200, 145, .32); border-radius: 44px;
  background: linear-gradient(100deg, #183f18 0, #1b4d19 600px, #1e5e1b 1200px, #237321 1900px, #268824 2400px);
  box-shadow: 0 0 0 1px rgba(0, 0, 0, .45);
}
.dock-item { position: relative; width: 90px; height: 90px; filter: drop-shadow(0 2px 2px rgba(0, 0, 0, .3)); }
.dock-item svg { width: 90px; height: 90px; }
.dock-item.running::after {
  content: ""; position: absolute; left: 41px; top: 109px; width: 8px; height: 8px; border-radius: 50%; background: #99e296;
}
.dock-sep { width: 2px; height: 106px; margin: -3px 8px 0 13px; background: rgba(150, 220, 145, .5); }
.dock-sep.second { margin: -3px 14px 0 14px; }
.dock-item.trash, .dock-item.trash svg { width: 80px; }
.cal-month { font: 700 18px "Inter", sans-serif; fill: #fff; }
.cal-day { font: 300 56px "Inter", sans-serif; letter-spacing: -1px; fill: #2a2a2a; }
```
